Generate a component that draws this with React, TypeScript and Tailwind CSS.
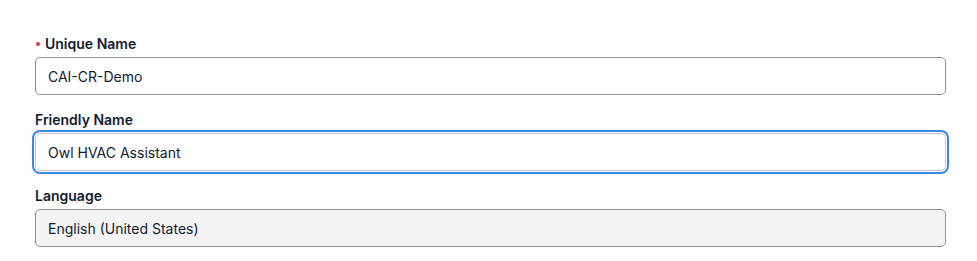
const font = { fontFamily: 'Inter, "Noto Sans", sans-serif' };

function Field({
  label,
  value,
  required,
  focused,
  readOnly,
}: {
  label: string;
  value: string;
  required?: boolean;
  focused?: boolean;
  readOnly?: boolean;
}) {
  return (
    <div className="flex flex-col">
      <label className="flex h-5 items-center text-[14px] font-semibold leading-5 text-[#121c2d]">
        {required && <span className="mr-[5px] ml-[1px] h-[4px] w-[4px] rounded-full bg-[#e0393e]" />}
        {label}
      </label>
      <div
        className={`mt-[3px] flex h-[38px] items-center rounded-[5px] border px-[12px] text-[14px] text-[#121c2d] ${
          focused
            ? 'border-[#c3c7d1] bg-white shadow-[0_0_0_1px_#ffffff,0_0_0_3px_#3f83ee]'
            : readOnly
              ? 'border-[#8c91a3] bg-[#f4f4f6]'
              : 'border-[#8c91a3] bg-white'
        }`}
      >
        {value}
      </div>
    </div>
  );
}

export default function App() {
  return (
    <div className="min-h-[261px] w-full bg-white" style={font}>
      <div className="flex w-[911px] flex-col gap-[15px] pt-[34px] ml-[35px]">
        <Field label="Unique Name" value="CAI-CR-Demo" required />
        <Field label="Friendly Name" value="Owl HVAC Assistant" focused />
        <Field label="Language" value="English (United States)" readOnly />
      </div>
    </div>
  );
}
